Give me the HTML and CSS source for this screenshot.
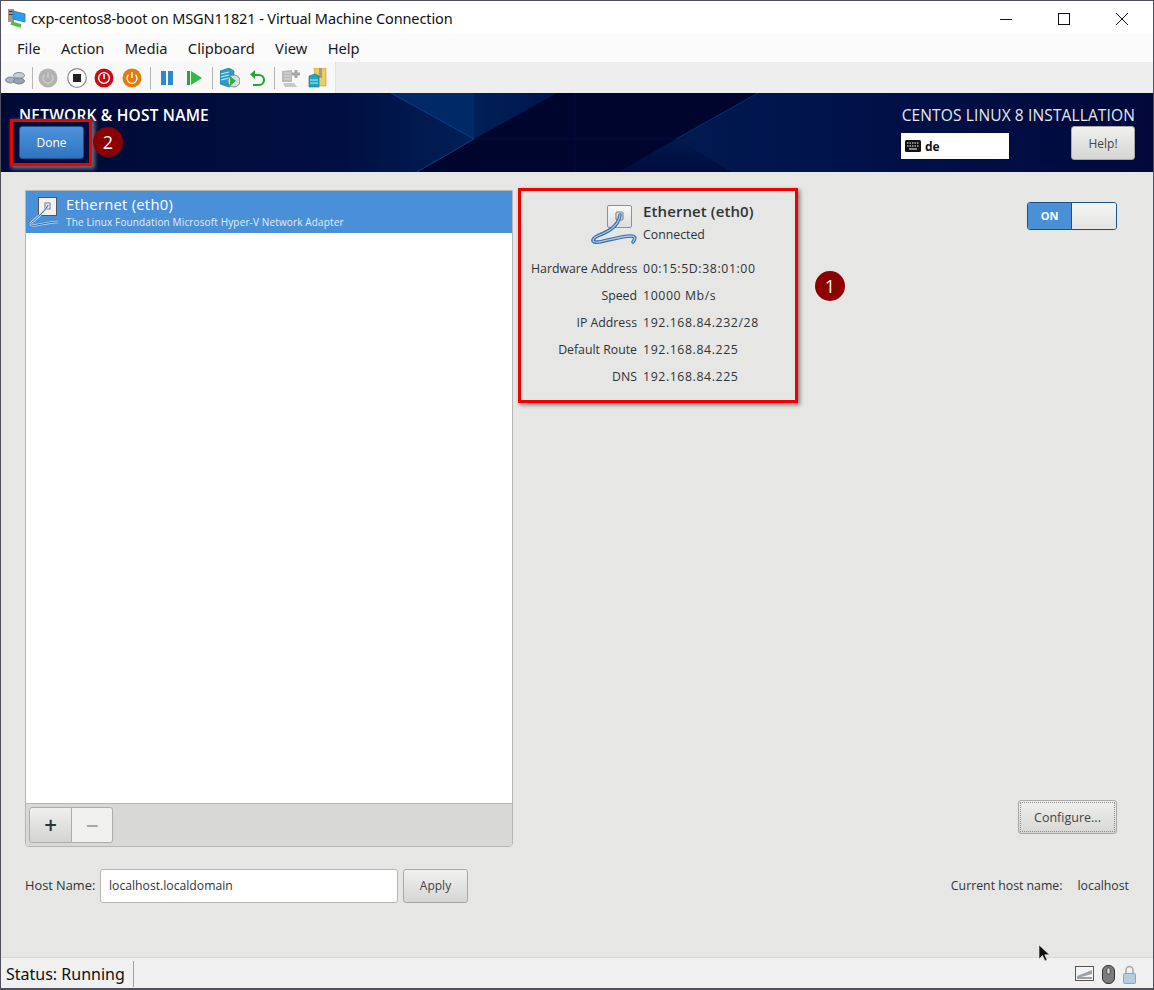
FILE: index.html
```html
<!DOCTYPE html>
<html lang="en">
<head>
    <meta charset="UTF-8">
    <meta name="viewport" content="width=device-width, initial-scale=1.0">
    <title>cxp-centos8-boot on MSGN11821 - Virtual Machine Connection</title>
    <link rel="stylesheet" href="styles.css">
</head>
<body>
    <div class="window">
        <div class="titlebar">
            <svg class="app-icon" width="20" height="20" viewBox="0 0 20 20">
                <rect x="1" y="1" width="6" height="13" fill="#9a9a9a"/>
                <rect x="2" y="3" width="4" height="1" fill="#333"/>
                <rect x="2" y="6" width="4" height="1" fill="#333"/>
                <path d="M6 3 L18 6 V14 L6 11 Z" fill="#2b9de8" stroke="#3a7fc0"/>
                <path d="M4 15 L14 18" stroke="#5cb84a" stroke-width="3.5"/>
            </svg>
            <span class="window-title">cxp-centos8-boot on MSGN11821 - Virtual Machine Connection</span>
            <div class="window-controls">
                <svg width="46" height="20" viewBox="0 0 46 20"><path d="M17 11.5 H29" stroke="#111"/></svg>
                <svg width="46" height="20" viewBox="0 0 46 20"><rect x="17.5" y="5.5" width="11" height="11" fill="none" stroke="#111"/></svg>
                <svg width="46" height="20" viewBox="0 0 46 20"><path d="M17 5 L29 17 M29 5 L17 17" stroke="#111"/></svg>
            </div>
        </div>

        <div class="menubar">
            <span>File</span><span>Action</span><span>Media</span><span>Clipboard</span><span>View</span><span>Help</span>
        </div>

        <div class="toolbar">
            <div class="tools">
                <svg class="tool" width="20" height="20" viewBox="0 0 20 20">
                    <ellipse cx="5.500" cy="12" rx="5" ry="3" fill="#a9b3bf" stroke="#6b7480" stroke-width=".8"/>
                    <ellipse cx="14" cy="7.500" rx="5.500" ry="3" fill="#c6cfd9" stroke="#6b7480" stroke-width=".8"/>
                    <ellipse cx="14" cy="13" rx="5.500" ry="3" fill="#97a2ae" stroke="#6b7480" stroke-width=".8"/>
                </svg>
                <span class="sep"></span>
                <svg class="tool" width="20" height="20" viewBox="0 0 20 20">
                    <circle cx="10" cy="10" r="9.5" fill="#b2b2b2"/>
                    <path d="M6.5 6.8 A5 5 0 1 0 13.5 6.8 M10 4 V10" fill="none" stroke="#d0d0d0" stroke-width="1.2"/>
                </svg>
                <svg class="tool wide" width="20" height="20" viewBox="0 0 20 20">
                    <circle cx="10" cy="10" r="9.3" fill="#fff" stroke="#8a8a8a" stroke-width="1.2"/>
                    <rect x="6" y="6" width="8" height="8" fill="#222"/>
                </svg>
                <svg class="tool" width="20" height="20" viewBox="0 0 20 20">
                    <circle cx="10" cy="10" r="9.5" fill="#cc0a12"/>
                    <circle cx="10" cy="10" r="5.4" fill="none" stroke="#fff" stroke-width="1.4"/>
                    <path d="M10 6 V11" stroke="#fff" stroke-width="1.6"/>
                </svg>
                <svg class="tool nudge" width="20" height="20" viewBox="0 0 20 20">
                    <circle cx="10" cy="10" r="9.5" fill="#df7c0c"/>
                    <path d="M6.5 6.8 A5 5 0 1 0 13.5 6.8 M10 4 V10" fill="none" stroke="#fff" stroke-width="1.3"/>
                </svg>
                <span class="sep nudge"></span>
                <svg class="tool nudge" width="20" height="20" viewBox="0 0 20 20">
                    <rect x="4" y="3" width="5" height="14" fill="#2a86d8"/>
                    <rect x="11" y="3" width="5" height="14" fill="#2a86d8"/>
                </svg>
                <svg class="tool" width="20" height="20" viewBox="0 0 20 20">
                    <rect x="3" y="3" width="3" height="14" fill="#1eaa34"/>
                    <path d="M7 3 L18 10 L7 17 Z" fill="#2dbb42"/>
                </svg>
                <span class="sep nudge"></span>
                <svg class="tool wide" width="20" height="20" viewBox="0 0 20 20">
                    <path d="M0 3 L9 0 L14 3 V16 L9 19 L0 16 Z" fill="#2a9cc8" stroke="#1b6d8d" stroke-width=".6"/>
                    <path d="M1 6 L9 4 M1 9 L9 7 M1 12 L9 10" stroke="#c9edf7" stroke-width="1.200"/>
                    <circle cx="14" cy="13" r="6" fill="#dcdcdc" stroke="#888"/>
                    <path d="M10 8 L16 13 L10 18 Z" fill="#2db045"/>
                </svg>
                <svg class="tool" width="20" height="20" viewBox="0 0 20 20">
                    <path d="M6 7 H12 A5 5 0 0 1 12 17 H6" fill="none" stroke="#26a63a" stroke-width="2.2"/>
                    <path d="M8 2 V11 L3 6.5 Z" fill="#26a63a"/>
                </svg>
                <span class="sep"></span>
                <svg class="tool nudge" width="20" height="20" viewBox="0 0 20 20">
                    <path d="M1 3 L11 2 V14 L1 14 Z" fill="#b9b9b9"/>
                    <path d="M3 5 H10 M3 8 H10 M3 11 H10" stroke="#dcdcdc"/>
                    <path d="M2 15 H13 L16 19 H4 Z" fill="#c8c8c8"/>
                    <path d="M15 2 V10 M11 6 H19" stroke="#a8a8a8" stroke-width="3"/>
                </svg>
                <svg class="tool" width="20" height="20" viewBox="0 0 20 20">
                    <path d="M6 0 H18 V18 H8 Z" fill="#f0cc5a" stroke="#b79a34" stroke-width=".6"/>
                    <rect x="11" y="0" width="3" height="10" fill="#9a9a9a"/>
                    <path d="M1 8 L7 6 L11 8 V19 H1 Z" fill="#1ba7c6" stroke="#12728a" stroke-width=".6"/>
                    <path d="M2 12 H10 M2 15 H10" stroke="#bfeaf4"/>
                </svg>
            </div>
        </div>

        <header class="header">
            <svg class="header-art" viewBox="0 0 1152 79" preserveAspectRatio="none">
                <defs>
                    <linearGradient id="leftGlow" x1="0" x2="1" y1="0" y2="0">
                        <stop offset="0" stop-color="#000a36"/>
                        <stop offset=".7" stop-color="#000e40"/>
                        <stop offset="1" stop-color="#002058"/>
                    </linearGradient>
                    <linearGradient id="topGlow" x1="0" x2="1" y1="0" y2="0">
                        <stop offset="0" stop-color="#002058"/>
                        <stop offset="1" stop-color="#00154c"/>
                    </linearGradient>
                    <linearGradient id="rightGlow" x1="0" x2="1" y1="0" y2="0">
                        <stop offset="0" stop-color="#001a50"/>
                        <stop offset=".35" stop-color="#00124a"/>
                        <stop offset="1" stop-color="#00093a"/>
                    </linearGradient>
                    <linearGradient id="lowGlow" x1="0" x2="0" y1="0" y2="1">
                        <stop offset="0" stop-color="#001a4e"/>
                        <stop offset="1" stop-color="#000c3c"/>
                    </linearGradient>
                </defs>
                <rect width="1152" height="79" fill="#00052e"/>
                <polygon points="0,0 390,0 473,46 416,79 0,79" fill="url(#leftGlow)"/>
                <polygon points="390,0 473,0 473,46" fill="#002a66"/>
                <polygon points="473,0 556,0 473,46" fill="url(#topGlow)"/>
                <polygon points="675,46 757,0 1152,0 1152,79 730,79" fill="url(#rightGlow)"/>
                <polygon points="675,46 618,79 730,79" fill="url(#lowGlow)"/>
                <path d="M473 46 H675 M574 0 V79" fill="none" stroke="#000c3c" stroke-width="1"/>
                <path d="M390 0 L473 46 L416 79" fill="none" stroke="#0a3f8e" stroke-width="1"/>
                <path d="M675 46 L757 0" fill="none" stroke="#06306e" stroke-width="1"/>
            </svg>
            <div class="header-left">
                <h1>NETWORK &amp; HOST NAME</h1>
                <button class="done-button" type="button">Done</button>
            </div>
            <div class="header-right">
                <div class="product">CENTOS LINUX 8 INSTALLATION</div>
                <div class="header-controls">
                    <div class="lang">
                        <svg width="16" height="12" viewBox="0 0 16 12">
                            <rect width="16" height="12" rx="1.500" fill="#111"/>
                            <path d="M2 3 H14 M2 6 H14" stroke="#fff" stroke-dasharray="1.500 1"/>
                            <path d="M4 9 H12" stroke="#fff"/>
                        </svg>
                        <span>de</span>
                    </div>
                    <button class="gtk-button help-button" type="button">Help!</button>
                </div>
            </div>
        </header>

        <main class="content">
            <div class="panes">
                <section class="device-list">
                    <div class="device-rows">
                        <div class="device-row">
                            <svg width="30" height="32" viewBox="0 0 30 32">
                                <rect x="9.500" y="1.500" width="18" height="18" fill="#f2f2f2" stroke="#555"/>
                                <rect x="16" y="7" width="5" height="6" fill="none" stroke="#777"/>
                                <path d="M19 9 C17 14 8 22 3 26 C0 29 3 30 8 29 C14 28 22 26 29 26" fill="none" stroke="#c6daf2" stroke-width="2.400"/>
                                <path d="M19 9 C17 14 8 22 3 26 C0 29 3 30 8 29 C14 28 22 26 29 26" fill="none" stroke="#2f69ad" stroke-width="1"/>
                            </svg>
                            <div class="device-text">
                                <div class="device-name">Ethernet (eth0)</div>
                                <div class="device-desc">The Linux Foundation Microsoft Hyper-V Network Adapter</div>
                            </div>
                        </div>
                    </div>
                    <div class="list-toolbar">
                        <div class="add-remove">
                            <button class="add-button" type="button">+</button>
                            <button class="remove-button" type="button">−</button>
                        </div>
                    </div>
                </section>

                <section class="device-detail">
                    <div class="detail-top">
                        <div class="detail-info">
                            <div class="detail-head">
                                <svg width="48" height="46" viewBox="0 0 48 46">
                                    <defs>
                                        <linearGradient id="plate" x1="0" x2="0" y1="0" y2="1">
                                            <stop offset="0" stop-color="#fafafa"/>
                                            <stop offset="1" stop-color="#dcdcdc"/>
                                        </linearGradient>
                                    </defs>
                                    <rect x="17.500" y="0.500" width="24" height="22" rx="1.500" fill="url(#plate)" stroke="#8f8f8f"/>
                                    <rect x="26" y="7" width="7" height="8" rx="1" fill="#e6e6e6" stroke="#777"/>
                                    <path d="M30 10 C29 18 24 24 12 29 C1 33 0 38 9 37 C20 35 32 31 41 31 C45 31 46 33 43 37" fill="none" stroke="#3a6ea8" stroke-width="3.600" stroke-linecap="round"/>
                                    <path d="M30 10 C29 18 24 24 12 29 C1 33 0 38 9 37 C20 35 32 31 41 31 C45 31 46 33 43 37" fill="none" stroke="#a9c8ea" stroke-width="1.300" stroke-linecap="round"/>
                                </svg>
                                <div>
                                    <div class="detail-name">Ethernet (eth0)</div>
                                    <div class="detail-state">Connected</div>
                                </div>
                            </div>
                            <dl class="props">
                                <dt>Hardware Address</dt><dd>00:15:5D:38:01:00</dd>
                                <dt>Speed</dt><dd>10000 Mb/s</dd>
                                <dt>IP Address</dt><dd>192.168.84.232/28</dd>
                                <dt>Default Route</dt><dd>192.168.84.225</dd>
                                <dt>DNS</dt><dd>192.168.84.225</dd>
                            </dl>
                        </div>
                        <div class="switch">
                            <span class="switch-on">ON</span>
                            <span class="switch-knob"></span>
                        </div>
                    </div>
                    <div class="detail-bottom">
                        <button class="gtk-button configure-button" type="button">Configure...</button>
                    </div>
                </section>
            </div>

            <div class="host-row">
                <label class="host-label" for="hostname">Host Name:</label>
                <input class="host-input" id="hostname" type="text" value="localhost.localdomain">
                <button class="gtk-button apply-button" type="button">Apply</button>
                <div class="current-host">
                    <span>Current host name:</span>
                    <span>localhost</span>
                </div>
            </div>
        </main>

        <footer class="statusbar">
            <span class="status-text">Status: Running</span>
            <div class="status-icons">
                <svg width="19" height="16" viewBox="0 0 19 16">
                    <rect x=".5" y=".5" width="18" height="14" fill="#f4f4f4" stroke="#555"/>
                    <path d="M2 10 L17 4 V8 L6 11 L17 11 V13 H2 Z" fill="#9aa2aa"/>
                </svg>
                <svg width="13" height="19" viewBox="0 0 13 19">
                    <rect x=".5" y=".5" width="12" height="18" rx="5.500" fill="#7c7c7c" stroke="#333"/>
                    <rect x="5" y="3" width="3" height="6" rx="1" fill="#ddd" stroke="#222" stroke-width=".6"/>
                </svg>
                <svg width="13" height="19" viewBox="0 0 13 19">
                    <path d="M3 9 V5 A3.500 3.500 0 0 1 10 5 V9" fill="none" stroke="#a9a9a9" stroke-width="1.600"/>
                    <rect x=".5" y="8.500" width="12" height="10" rx="1" fill="#b4cee0" stroke="#8fa4b3"/>
                </svg>
            </div>
        </footer>

        <!-- annotations drawn over the screenshot -->
        <div class="mark mark-info"></div>
        <div class="mark mark-done"></div>
        <div class="badge badge-one">1</div>
        <div class="badge badge-two">2</div>
        <svg class="cursor" width="13" height="18" viewBox="0 0 13 18">
            <path d="M1 1 V15 L4.500 11.500 L7 17 L9 16 L6.800 10.800 L11.500 10.800 Z" fill="#111" stroke="#eee" stroke-width=".6"/>
        </svg>
    </div>
</body>
</html>
```

FILE: styles.css
```css
* {
    box-sizing: border-box;
}

body {
    margin: 0;
    font-family: "Open Sans", "Noto Sans", sans-serif;
    color: #2e3436;
}

.window {
    position: relative;
    width: 1154px;
    height: 990px;
    display: flex;
    flex-direction: column;
    border: 1px solid #50505c;
    border-bottom-width: 2px;
    overflow: hidden;
    background: #e6e6e5;
}

/* windows chrome */
.titlebar {
    height: 33px;
    flex: none;
    display: flex;
    align-items: center;
    background: #fff;
    padding-left: 6px;
}

.app-icon {
    margin-right: 4px;
}

.window-title {
    font-family: "Noto Sans", sans-serif;
    font-size: 14.5px;
    letter-spacing: -.1px;
    color: #111;
}

.window-controls {
    margin-left: auto;
    display: flex;
    gap: 12px;
    padding-right: 8px;
}

.menubar {
    height: 28px;
    flex: none;
    display: flex;
    align-items: center;
    padding-left: 16px;
    gap: 20.4px;
    background: #fbfbfb;
    font-family: "Noto Sans", sans-serif;
    font-size: 14.7px;
    color: #1a1a1a;
}

.toolbar {
    height: 31px;
    flex: none;
    background: #eeeeee;
}

.tools {
    width: 335px;
    height: 31px;
    padding-left: 4px;
    display: flex;
    align-items: center;
    background: #f8f8f8;
    border-right: 1px solid #e2e2e2;
}

.tool {
    margin-right: 7px;
    flex: none;
}

.sep {
    width: 1px;
    height: 22px;
    background: #b5b5b5;
    margin-right: 5px;
    flex: none;
}

.tool.wide {
    margin-left: 2px;
}

.tool.nudge,
.sep.nudge {
    margin-left: 1px;
}

/* anaconda header */
.header {
    position: relative;
    height: 79px;
    flex: none;
    display: flex;
    justify-content: space-between;
    padding: 13px 18px 0 18px;
    color: #fff;
}

.header-art {
    position: absolute;
    left: 0;
    top: 0;
    width: 100%;
    height: 100%;
}

.header-left,
.header-right {
    position: relative;
}

.header h1 {
    margin: 0;
    font-size: 15.5px;
    line-height: 19px;
    font-weight: 600;
    letter-spacing: .2px;
    white-space: nowrap;
}

.done-button {
    display: block;
    width: 65px;
    height: 33px;
    margin: 1px 0 0;
    border: 1px solid #1c4f8c;
    border-radius: 3px;
    background: linear-gradient(#4d93db, #2f74c0);
    color: #fff;
    font-family: inherit;
    font-size: 12px;
}

.product {
    text-align: right;
    font-size: 15.5px;
    line-height: 19px;
    letter-spacing: .13px;
    color: #e8e8f0;
    white-space: nowrap;
}

.header-controls {
    display: flex;
    align-items: flex-start;
    margin-top: 1px;
}

.lang {
    width: 108px;
    height: 26px;
    margin-top: 7px;
    display: flex;
    align-items: center;
    gap: 4px;
    padding-left: 4px;
    background: #fff;
    color: #111;
    font-size: 12px;
    font-weight: 700;
}

.help-button {
    width: 64px;
    height: 34px;
    margin-left: 62px;
}

.gtk-button {
    border: 1px solid #a8a8a6;
    border-radius: 3px;
    background: linear-gradient(#f0f0ef, #d6d6d4);
    color: #444;
    font-family: inherit;
    font-size: 12px;
    padding: 0;
}

/* main spoke */
.content {
    flex: 1;
    display: flex;
    flex-direction: column;
    padding: 18px 24px 0 24px;
}

.panes {
    display: flex;
    height: 657px;
    flex: none;
}

.device-list {
    width: 488px;
    flex: none;
    display: flex;
    flex-direction: column;
    border: 1px solid #b6b6b3;
    border-radius: 0 0 4px 4px;
    background: #fff;
    overflow: hidden;
}

.device-rows {
    flex: 1;
}

.device-row {
    height: 42px;
    display: flex;
    align-items: center;
    gap: 7px;
    padding-left: 3px;
    background: #4a90d9;
    color: #fff;
}

.device-name {
    font-size: 14.8px;
    line-height: 18px;
    letter-spacing: .25px;
}

.device-desc {
    margin-top: 2px;
    font-size: 10px;
    line-height: 14px;
    letter-spacing: .14px;
    color: #e3edf8;
}

.list-toolbar {
    height: 43px;
    flex: none;
    padding: 3px;
    background: #d8d8d6;
    border-top: 1px solid #b6b6b3;
}

.add-remove {
    display: flex;
    width: 84px;
    height: 36px;
}

.add-remove button {
    border: 1px solid #adadab;
    padding: 0;
    font-family: "DejaVu Sans", sans-serif;
    font-size: 17px;
    font-weight: 700;
}

.add-button {
    width: 43px;
    border-radius: 3px 0 0 3px;
    background: linear-gradient(#efefee, #d4d4d2);
    color: #2e3436;
}

.remove-button {
    width: 41px;
    border-left: none !important;
    border-radius: 0 3px 3px 0;
    background: #f0f0ef;
    color: #a6a8a8;
}

.device-detail {
    flex: 1;
    display: flex;
    flex-direction: column;
    justify-content: space-between;
    padding: 12px 12px 13px 0;
}

.detail-top {
    display: flex;
    justify-content: space-between;
    align-items: flex-start;
}

.detail-info {
    width: 260px;
    margin-left: 18px;
    font-size: 12.3px;
}

.detail-head {
    display: flex;
    gap: 5px;
    margin-left: 59px;
    margin-top: 3px;
}

.detail-name {
    font-size: 15px;
    font-weight: 600;
    line-height: 13px;
    letter-spacing: .1px;
    white-space: nowrap;
}

.detail-state {
    line-height: 17px;
    margin-top: 8px;
}

.props {
    display: grid;
    grid-template-columns: 106px auto;
    column-gap: 6px;
    row-gap: 10px;
    margin: 9px 0 0 0;
    line-height: 17px;
}

.props dt {
    text-align: right;
    white-space: nowrap;
}

.props dd {
    margin: 0;
    letter-spacing: .6px;
}

.switch {
    width: 90px;
    height: 28px;
    display: flex;
    border: 1px solid #1c4f8c;
    border-radius: 3px;
    overflow: hidden;
}

.switch-on {
    width: 44px;
    background: #4a90d9;
    color: #fff;
    font-size: 11px;
    font-weight: 700;
    line-height: 26px;
    text-align: center;
    border-right: 1px solid #1c4f8c;
}

.switch-knob {
    flex: 1;
    background: linear-gradient(#f5f5f4, #e4e4e2);
}

.detail-bottom {
    display: flex;
    justify-content: flex-end;
}

.configure-button {
    width: 99px;
    height: 34px;
    font-size: 12.5px;
    outline: 1px dotted #8a8a88;
    outline-offset: -3px;
}

.host-row {
    display: flex;
    align-items: center;
    margin-top: 22px;
    height: 34px;
    font-size: 12.3px;
}

.host-label {
    width: 75px;
    flex: none;
    padding-bottom: 2px;
    font-size: 12.8px;
}

.host-input {
    width: 298px;
    height: 34px;
    border: 1px solid #b6b6b3;
    border-radius: 3px;
    padding: 0 8px 2px;
    font-family: inherit;
    font-size: 12.2px;
    color: #2e3436;
}

.apply-button {
    width: 65px;
    height: 34px;
    margin-left: 5px;
    padding-bottom: 2px;
}

.current-host {
    margin-left: auto;
    display: flex;
    gap: 15px;
    padding-bottom: 2px;
}

.statusbar {
    height: 31px;
    margin-top: auto;
    flex: none;
    display: flex;
    align-items: center;
    justify-content: space-between;
    padding: 2px 17px 0 5px;
    background: #f0f0f0;
    border-top: 1px solid #d8d8d8;
}

.status-text {
    height: 26px;
    line-height: 26px;
    padding-right: 8px;
    border-right: 1px solid #a0a0a0;
    font-family: "Noto Sans", sans-serif;
    font-size: 16px;
    color: #111;
}

.status-icons {
    display: flex;
    align-items: center;
    gap: 8px;
}

/* annotations */
.mark {
    position: absolute;
    border: 3px solid #f00000;
    box-shadow: 2px 2px 4px rgba(0, 0, 0, .45);
}

.mark-info {
    left: 517px;
    top: 187px;
    width: 280px;
    height: 215px;
}

.mark-done {
    left: 9px;
    top: 118px;
    width: 82px;
    height: 47px;
    box-shadow: 2px 2px 4px 1px rgba(150, 150, 150, .7);
}

.badge {
    position: absolute;
    width: 30px;
    height: 30px;
    border-radius: 50%;
    background: #8b0000;
    color: #fff;
    font-size: 18px;
    line-height: 30px;
    text-align: center;
}

.badge-one {
    left: 814px;
    top: 270px;
}

.badge-two {
    left: 92px;
    top: 126px;
}

.cursor {
    position: absolute;
    left: 1037px;
    top: 943px;
}
```
